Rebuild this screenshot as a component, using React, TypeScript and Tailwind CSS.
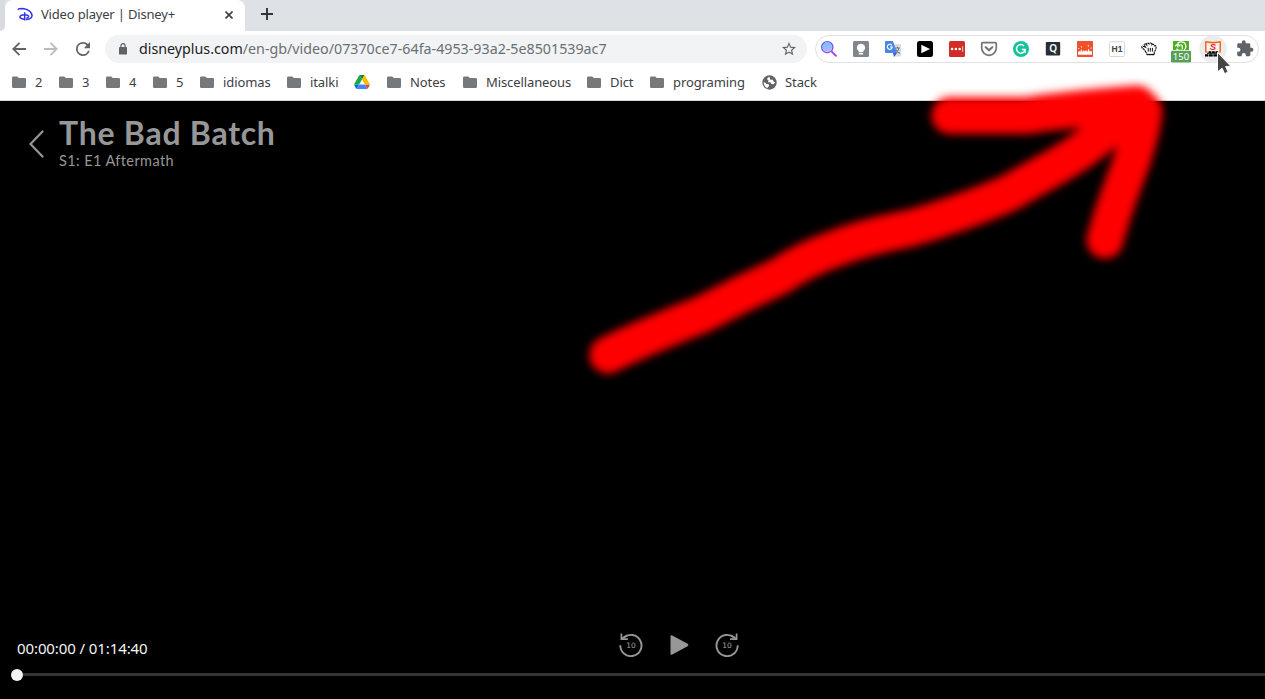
import type { ReactNode } from "react";

const Folder = () => (
  <svg className="h-[13px] w-[14px] shrink-0" viewBox="0 0 14 13" fill="#75797c">
    <path d="M1.3 0.5H5.3L6.8 2H12.7Q14 2 14 3.3V10.7Q14 12 12.7 12H1.3Q0 12 0 10.7V1.8Q0 .5 1.3.5Z" />
  </svg>
);

const Drive = () => (
  <svg className="h-[14px] w-4 shrink-0" viewBox="0 0 87.3 78">
    <path d="m6.6 66.85 3.85 6.65c.8 1.4 1.95 2.5 3.3 3.3L27.5 53H0c0 1.55.4 3.1 1.2 4.5z" fill="#0066da" />
    <path d="M43.65 25 29.9 1.2c-1.35.8-2.5 1.9-3.3 3.3l-25.4 44A9.06 9.06 0 0 0 0 53h27.5z" fill="#21a54a" />
    <path d="M73.55 76.8c1.35-.8 2.5-1.9 3.3-3.3l1.6-2.75 7.65-13.25c.8-1.4 1.2-2.95 1.2-4.5H59.8l5.85 11.5z" fill="#ea4335" />
    <path d="M43.65 25 57.4 1.2C56.05.4 54.5 0 52.9 0H34.4c-1.6 0-3.15.45-4.5 1.2z" fill="#188038" />
    <path d="M59.8 53H27.5L13.75 76.8c1.35.8 2.9 1.2 4.5 1.2h50.8c1.6 0 3.15-.45 4.5-1.2z" fill="#4285f4" />
    <path d="m73.4 26.5-12.7-22c-.8-1.4-1.95-2.5-3.3-3.3L43.65 25 59.8 53h27.45c0-1.55-.4-3.1-1.2-4.5z" fill="#fbbc04" />
  </svg>
);

const Globe = () => (
  <svg className="h-[15px] w-[15px] shrink-0" viewBox="0 0 15 15">
    <circle cx="7.5" cy="7.5" r="7.2" fill="#5f6368" />
    <path d="M7.6 1.7Q5 2.4 5 4.2L6.6 5.5 5.8 7.2 8.5 7.3 9.3 8.9 11.6 9.2 13.2 7.4 11.5 6.5 10.7 4.6 8.3 4.4Z" fill="#fff" />
    <path d="M1.6 6.7 4.8 9 7 9.4 7.2 11 5.6 12.2 6 13.2Q1.7 12 1.6 6.7Z" fill="#fff" />
    <path d="M7.6 1.7 10.4 1.9 11 4.2 8.3 4.4Z" fill="#5f6368" />
  </svg>
);

type Bookmark = { icon: ReactNode; label?: string; box: string };

const bookmarks: Bookmark[] = [
  { icon: <Folder />, label: "2", box: "w-[47px]" },
  { icon: <Folder />, label: "3", box: "w-[47px]" },
  { icon: <Folder />, label: "4", box: "w-[47px]" },
  { icon: <Folder />, label: "5", box: "w-[47px]" },
  { icon: <Folder />, label: "idiomas", box: "w-[87px]" },
  { icon: <Folder />, label: "italki", box: "w-[67px]" },
  { icon: <Drive />, box: "w-[33px]" },
  { icon: <Folder />, label: "Notes", box: "w-[76px]" },
  { icon: <Folder />, label: "Miscellaneous", box: "w-[124px]" },
  { icon: <Folder />, label: "Dict", box: "w-[63px]" },
  { icon: <Folder />, label: "programing", box: "w-[112px]" },
  { icon: <Globe />, label: "Stack", box: "w-[70px]" },
];

const Ext = ({ children }: { children: ReactNode }) => (
  <svg className="h-4 w-4 shrink-0 overflow-visible" viewBox="0 0 16 16">
    {children}
  </svg>
);

const Extensions = () => (
  <div className="ml-2 flex h-7 w-[444px] shrink-0 items-center gap-4 rounded-full border border-[#dfe1e5] bg-white pl-[5px]">
    <Ext>
      <defs>
        <linearGradient id="lens" x1="0" y1="0" x2="1" y2="1">
          <stop offset="0" stopColor="#3d5af5" />
          <stop offset="1" stopColor="#a63bf5" />
        </linearGradient>
        <linearGradient id="glass" x1="0" y1="0" x2="0" y2="1">
          <stop offset="0" stopColor="#6fc3f7" />
          <stop offset="1" stopColor="#b8b4fb" />
        </linearGradient>
      </defs>
      <circle cx="6.3" cy="6.2" r="4.8" fill="url(#glass)" />
      <circle cx="6.3" cy="6.2" r="5.6" fill="none" stroke="url(#lens)" strokeWidth="1.3" />
      <path d="m10.5 10.4 5 5" stroke="#9a3cf5" strokeWidth="1.8" />
    </Ext>
    <Ext>
      <rect width="16" height="16" rx="1.5" fill="#80868b" />
      <path d="M8 2.7a4 4 0 0 0-2.3 7.3v1.3h4.6V10A4 4 0 0 0 8 2.7ZM5.9 12h4.2v1.4H5.9Z" fill="#fff" />
    </Ext>
    <Ext>
      <path d="M7 3h8q1 0 1 1v10.5q0 1-1 1H9Z" fill="#dcdcdc" />
      <path d="M1 0h7l4 12H1q-1 0-1-1V1q0-1 1-1Z" fill="#4a86e8" />
      <path d="M8 12h4l-3 4Z" fill="#2f61c1" />
      <path d="M6.8 4.3A2.5 2.5 0 1 0 7.3 6H5" fill="none" stroke="#fff" strokeWidth="1.1" />
      <path d="M10 7h5M12.5 5.7V7M14 7q-.5 3-3 5M11 8.5q1 2.5 4 4" fill="none" stroke="#6c7f8c" strokeWidth="1.1" />
    </Ext>
    <Ext>
      <rect width="16" height="16" rx="2.5" fill="#000" />
      <path d="M4.3 3.8v8.4L13 8Z" fill="#fff" />
    </Ext>
    <Ext>
      <rect width="16" height="16" rx="1.5" fill="#d32d27" />
      <circle cx="3.1" cy="8" r="1.3" fill="#fff" />
      <circle cx="6.9" cy="8" r="1.3" fill="#fff" />
      <circle cx="10.7" cy="8" r="1.3" fill="#fff" />
      <path d="M13.7 5.3v5.4" stroke="#fff" strokeWidth=".8" />
    </Ext>
    <Ext>
      <path d="M1.7 1.7h12.6q1 0 1 1V7a7.3 7.3 0 0 1-14.6 0V2.7q0-1 1-1Z" fill="none" stroke="#747474" strokeWidth="1.7" />
      <path d="m4.7 6.2 3.3 3.1 3.3-3.1" fill="none" stroke="#747474" strokeWidth="2.1" strokeLinecap="round" strokeLinejoin="round" />
    </Ext>
    <Ext>
      <circle cx="8" cy="8" r="8" fill="#15c39a" />
      <path d="M11 4.9A4.3 4.3 0 1 0 12.1 8.6H8.8M12 8.3v3.4" fill="none" stroke="#fff" strokeWidth="1.5" />
    </Ext>
    <Ext>
      <rect x=".8" y="1" width="14.4" height="13.4" rx=".8" fill="#2a2e34" />
      <text x="8.1" y="11.2" textAnchor="middle" className="fill-white font-['Noto_Sans'] text-[10px] font-semibold">Q</text>
    </Ext>
    <Ext>
      <rect width="16" height="16" rx=".8" fill="#f0512a" />
      <path d="M1 13.8V10.9l1.6-1 .6 1 1-2.8 1.3 2.8L6.7 9l1.2 1.7 1-1.8 1.6 1.8 1.2-3.2 1.1 3.6 1-1.4 1.2 1V13.8Z" fill="#fff" />
      <path d="M10.8 4.3h1.2v1.2h-1.2ZM4 5.2h1v1.3h-1ZM1.2 7h1v1h-1ZM13.6 6.6h1v1.2h-1Z" fill="#fff" />
    </Ext>
    <Ext>
      <rect x=".5" y=".7" width="15" height="14.8" rx="1" fill="#fff" stroke="#d8d8d8" />
      <text x="8" y="11.1" textAnchor="middle" className="fill-[#40454b] font-['Liberation_Sans'] text-[8.5px] font-bold">H1</text>
    </Ext>
    <Ext>
      <path d="M5.3 11.6 3 8.4 1 6.8Q.2 5.3 1.8 5.1L4.5 6.2 3.2 3.7Q3.6 2.4 5 3.2L5.7 4Q5.4 2.3 6.6 2.1 7.8 2 8.3 3.4 8.4 1.9 9.6 2q1.2.2 1.3 1.7.8-1.1 1.8-.2l.5 1.4q1.3-.8 1.9.4.2 1.7-.5 3.1l-1.3 2.8v2.4H6.1Z" fill="#fff" stroke="#111" strokeWidth="1.1" strokeDasharray="2.4 .5" />
      <path d="M7.2 6.9v3.7M9.3 6.9v3.7M11.4 6.9v3.7M6.2 13.4h7" stroke="#111" strokeWidth="1" />
    </Ext>
    <Ext>
      <rect width="16" height="9" fill="#4db01c" />
      <path d="M3.4 7.6Q5 10 8 9.3M4.6 2.1Q8.2-.4 11.6 2 14.4 5.3 11.2 9.2" fill="none" stroke="#fff" strokeWidth="1.3" />
      <path d="M2.2 5 5 2.8 7.2 5.4M4.8 3.2V6.6M9.3 8.4V5Q8.7 3.4 7.4 4" fill="none" stroke="#fff" strokeWidth="1.2" />
      <rect x="-2.2" y="9.4" width="20.4" height="12.4" rx="1.6" fill="#fff" />
      <rect x="-2" y="9.8" width="20" height="11.8" rx="1.4" fill="#579f59" />
      <text x="8" y="19.2" textAnchor="middle" className="fill-white font-['Noto_Sans'] text-[9.5px]">150</text>
    </Ext>
    <Ext>
      <circle cx="8" cy="8" r="13.7" fill="#ececec" />
      <path d="M1.2 1.2H14.8V10.6H1.2Z" fill="#f4f4f4" />
      <path d="M0 0Q8 1.6 16 0V11.4H13.4V10.4H14.5V1.8Q8 3.1 1.5 1.8V10.4H2.6V11.4H0Z" fill="#f26a21" />
      <text x="7.8" y="9.4" textAnchor="middle" className="fill-[#ed1c24] font-['Liberation_Sans'] text-[9.5px] font-bold italic">S</text>
      <path d="M3.6 10.2h2.6v2H3.6ZM6.8 10.2h3v2h-3ZM10.4 10.2H13v2h-2.6ZM0 13.2h3.4v2.4H0ZM4 13.2h3.8v2.4H4ZM8.4 13.2h4.2v2.4H8.4ZM2 11.8h11v1H2Z" fill="#000" />
    </Ext>
    <Ext>
      <path transform="translate(-1.3 -1.6) scale(.77)" d="M20.5 11H19V7c0-1.1-.9-2-2-2h-4V3.5a2.5 2.5 0 0 0-5 0V5H4c-1.1 0-2 .9-2 2v3.8h1.5a2.7 2.7 0 0 1 0 5.4H2V20c0 1.1.9 2 2 2h3.8v-1.5a2.7 2.7 0 0 1 5.4 0V22H17c1.1 0 2-.9 2-2v-4h1.5a2.5 2.5 0 0 0 0-5Z" fill="#5f6368" />
    </Ext>
  </div>
);

const Skip = ({ flip = false }: { flip?: boolean }) => (
  <svg className="h-6 w-6 shrink-0" viewBox="0 0 24 24">
    <g transform={flip ? "translate(24 0) scale(-1 1)" : undefined} fill="none" stroke="#979797" strokeWidth="1.9">
      <path d="M1.3 12.2A10.6 10.6 0 1 0 4.6 4.8" />
      <path d="M2.4.4V6.2H8.9" strokeWidth="1.7" />
      <path d="m2.8 5.8 4.2-2.9" strokeWidth="1.7" />
    </g>
    <text x="12" y="14.6" textAnchor="middle" className="fill-[#a5a5a5] font-['DejaVu_Sans'] text-[7.5px]">10</text>
  </svg>
);

export default function App() {
  return (
    <div className="relative flex h-[699px] w-[1265px] flex-col overflow-hidden bg-white font-['Noto_Sans',sans-serif]">
      <div className="flex h-[31px] shrink-0 bg-[#dee1e6]">
        <div className="flex w-[5px] bg-white">
          <div className="w-full rounded-br-[5px] bg-[#d8dbe0]" />
        </div>
        <div className="flex w-60 items-center rounded-t-lg bg-white pb-0.5 pl-3">
          <svg className="mr-2 h-4 w-4 shrink-0" viewBox="0 0 16 16" fill="none" stroke="#3232ec">
            <path d="M1.2 3Q.7 1.5 4.5 1.4 9.8 1.5 13.3 4.7 16.9 9.2 13 11.6 11.3 12.6 8.6 12.5" strokeWidth="1.5" />
            <path d="M7.7 5.2V13.6M7.7 12.3Q3.2 11.8 2.8 10 3.2 7.9 7.5 7.7 12.2 7.9 11.6 9.9 10.8 11.1 9.3 11" strokeWidth="1.4" />
          </svg>
          <span className="w-[181px] whitespace-nowrap text-[13px] tracking-[-0.18px] text-[#3c4043]">Video player | Disney+</span>
          <svg className="ml-[3px] h-2 w-2" viewBox="0 0 8 8" stroke="#3c4043" strokeWidth="1.6">
            <path d="m.5.5 7 7M7.5.5l-7 7" />
          </svg>
        </div>
        <svg className="ml-4 mt-2 h-3 w-3" viewBox="0 0 12 12" stroke="#303438" strokeWidth="1.9">
          <path d="M6 0v12M0 6h12" />
        </svg>
      </div>

      <div className="flex h-9 shrink-0 items-center pl-3">
        <svg className="h-[14px] w-[14px]" viewBox="0 0 14 14" fill="none" stroke="#5f6368" strokeWidth="1.8">
          <path d="M14 7H1.5M7.5.8 1.3 7l6.2 6.2" />
        </svg>
        <svg className="ml-[18px] h-[14px] w-[14px]" viewBox="0 0 14 14" fill="none" stroke="#babcbe" strokeWidth="1.8">
          <path d="M0 7h12.5M6.5.8 12.7 7l-6.2 6.2" />
        </svg>
        <svg className="ml-[18px] h-[14px] w-[14px]" viewBox="4 4 16 16" fill="#5f6368">
          <path d="M17.65 6.35A7.96 7.96 0 0 0 12 4a8 8 0 1 0 7.73 10h-2.08A6 6 0 1 1 12 6c1.66 0 3.14.69 4.22 1.78L13 11h7V4z" />
        </svg>
        <div className="ml-[15px] flex h-7 w-[702px] shrink-0 items-center rounded-full bg-[#f1f3f4] pl-[14px] pr-[11px]">
          <svg className="mb-px mr-[12px] h-3 w-2" viewBox="0 0 8 12">
            <rect y="4" width="8" height="7.6" rx=".9" fill="#5f6368" />
            <path d="M1.9 4.2V2.8a2.1 2.1 0 0 1 4.2 0v1.4" fill="none" stroke="#5f6368" strokeWidth="1.2" />
          </svg>
          <span className="whitespace-nowrap text-[14.25px] text-[#6b6f73]">
            <span className="text-[#202124]">disneyplus.com</span>/en-gb/video/07370ce7-64fa-4953-93a2-5e8501539ac7
          </span>
          <svg className="ml-auto h-[14px] w-[14px]" viewBox="2 2 20 20" fill="#5f6368">
            <path d="m22 9.24-7.19-.62L12 2 9.19 8.63 2 9.24l5.46 4.73L5.82 21 12 17.27 18.18 21l-1.63-7.03zM12 15.4l-3.76 2.27 1-4.28-3.32-2.88 4.38-.38L12 6.1l1.71 4.04 4.38.38-3.32 2.88 1 4.28z" />
          </svg>
        </div>
        <Extensions />
      </div>

      <div className="flex h-[33px] shrink-0 items-center pb-[3px] pl-3 text-[13px] text-[#3c4043]">
        {bookmarks.map((b, i) => (
          <div key={i} className={`flex shrink-0 items-center ${b.box}`}>
            {b.icon}
            {b.label && (
              <span className={`mt-0.5 tracking-[-0.1px] ${b.label === "Stack" ? "ml-2" : "ml-[9px]"}`}>{b.label}</span>
            )}
          </div>
        ))}
      </div>

      <div className="flex min-h-0 flex-1 flex-col border-t border-[#d5d7da] bg-black">
        <div className="flex items-start pl-[29px] pt-[14px] font-['Lato',sans-serif] text-[#979797]">
          <svg className="mt-[15px] h-7 w-[15px] shrink-0" viewBox="0 0 15 28" fill="none" stroke="#979797" strokeWidth="2.2" strokeLinecap="round">
            <path d="M13.5 1.5 1.5 14l12 12.5" />
          </svg>
          <div className="ml-[15px] flex flex-col">
            <h1 className="whitespace-nowrap text-[32px] font-bold leading-[35px] tracking-[0.75px]">The Bad Batch</h1>
            <p className="mt-px whitespace-nowrap text-[14.5px] leading-5 tracking-[0.4px]">S1: E1 Aftermath</p>
          </div>
        </div>
        <div className="mt-auto flex h-8 items-center pl-[17px]">
          <div className="w-[602px] pt-1.5 text-[15px] tracking-[-0.1px] text-[#f4f4f4]">00:00:00 / 01:14:40</div>
          <div className="-mt-px flex items-center">
            <Skip />
            <svg className="ml-[27px] mr-[26px] h-5 w-[19px]" viewBox="0 0 19 20" fill="#979797">
              <path d="M.5 1.6Q.5-.3 2.3.6l15.3 8.2q1.6 1.2 0 2.4L2.3 19.4Q.5 20.3.5 18.4Z" />
            </svg>
            <Skip flip />
          </div>
        </div>
        <div className="flex h-[38px] items-start pl-[11px] pt-2">
          <div className="h-3 w-3 shrink-0 rounded-full bg-[#f4f4f4]" />
          <div className="mt-1 h-[3px] flex-1 bg-[#333]" />
        </div>
      </div>

      <svg className="pointer-events-none absolute inset-0 h-full w-full" viewBox="0 0 1265 699">
        <defs>
          <filter id="soft" x="-10%" y="-10%" width="120%" height="120%" colorInterpolationFilters="sRGB">
            <feGaussianBlur stdDeviation="4.4" />
          </filter>
        </defs>
        <g filter="url(#soft)" fill="none" stroke="#f00" strokeWidth="37" strokeLinecap="round" strokeLinejoin="round">
          <path d="M608 355Q640 339 703 314L742 294 780 276Q805 259 837 248 865 237 911 228 960 214 1007 194L1055 167Q1085 150 1105 132L1138 105" />
          <path d="M950 115.500H1027Q1060 110 1137 104L1144 111Q1142 135 1127 174 1113 210 1105 240" />
        </g>
        <path d="M1217.5 52.5v19.3l4.6-3.6 2.5 5.5 3.5-1.7-2.5-5.4 5.2-.4Z" fill="#454545" stroke="#fff" strokeWidth="1" />
      </svg>
    </div>
  );
}
